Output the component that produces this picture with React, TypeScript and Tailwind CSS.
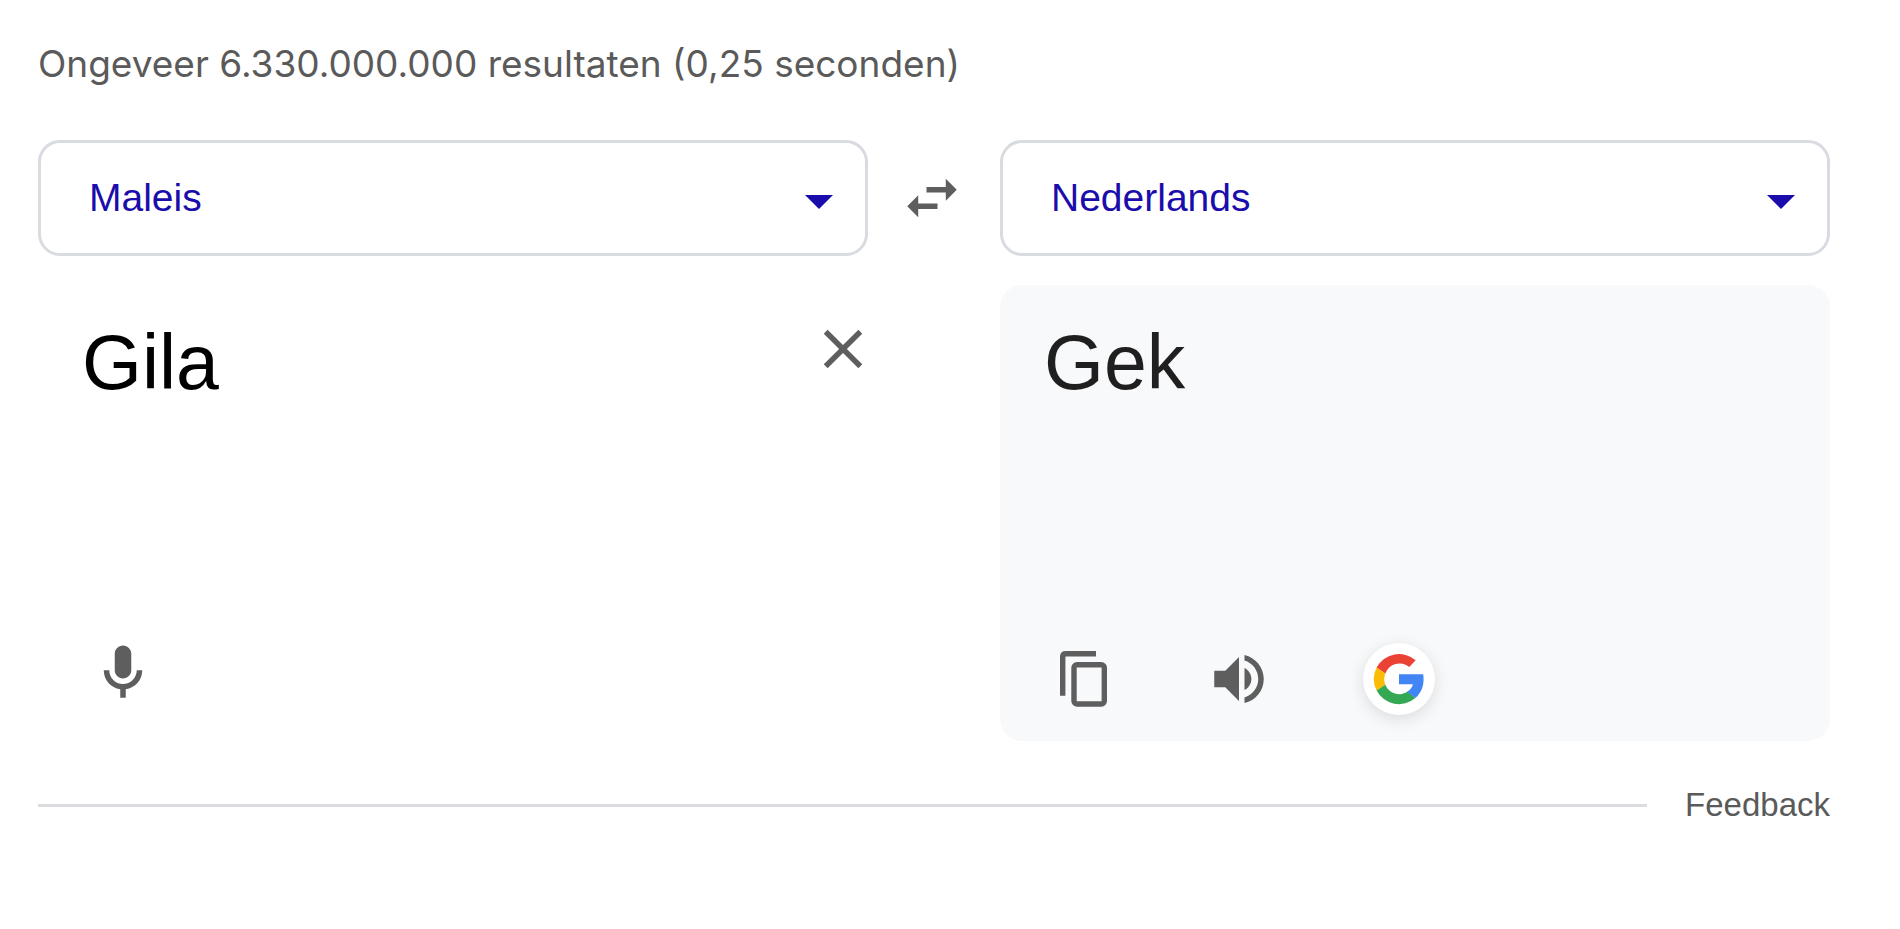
import { ReactNode, useState } from "react";

const SANS = "font-['Liberation_Sans',Arial,sans-serif]";

const LANGUAGES = ["Maleis", "Nederlands"];

function LanguageSelect({
  label,
  value,
  onChange,
}: {
  label: string;
  value: string;
  onChange: (value: string) => void;
}) {
  return (
    <div className="relative">
      <select
        aria-label={label}
        value={value}
        onChange={(e) => onChange(e.target.value)}
        className="block h-[116px] w-full cursor-pointer appearance-none rounded-[22px] border-3 border-[#d8dbe0] bg-white pr-20 pl-12 text-[39px] text-[#1a0dab]"
      >
        {LANGUAGES.map((name) => (
          <option key={name}>{name}</option>
        ))}
      </select>
      <svg
        aria-hidden="true"
        viewBox="0 0 28 14"
        className="pointer-events-none absolute top-[55px] right-[35px] h-[14px] w-7 fill-[#1a0dab]"
      >
        <path d="M0 0h28L14 14z" />
      </svg>
    </div>
  );
}

function IconButton({
  label,
  onClick,
  children,
}: {
  label: string;
  onClick?: () => void;
  children: ReactNode;
}) {
  return (
    <button
      type="button"
      aria-label={label}
      onClick={onClick}
      className="flex size-[66px] shrink-0 cursor-pointer items-center justify-center text-[#5e5e5e]"
    >
      {children}
    </button>
  );
}

function Glyph({ d }: { d: string }) {
  return (
    <svg viewBox="0 0 24 24" className="size-full fill-current" aria-hidden="true">
      <path d={d} />
    </svg>
  );
}

export default function App() {
  const [source, setSource] = useState("Maleis");
  const [target, setTarget] = useState("Nederlands");
  const [text, setText] = useState("Gila");

  return (
    <main className={`${SANS} bg-white pt-9 pr-[70px] pb-24 pl-[38px]`}>
      <p className="font-['Inter',sans-serif] text-[37px] leading-[56px] text-[#5a5a5a]">
        Ongeveer 6.330.000.000 resultaten (0,25 seconden)
      </p>

      <div className="mt-12 grid grid-cols-[1fr_132px_1fr] items-center">
        <LanguageSelect label="Brontaal" value={source} onChange={setSource} />
        <div className="flex justify-center pr-1">
          <IconButton
            label="Talen omwisselen"
            onClick={() => {
              setSource(target);
              setTarget(source);
            }}
          >
            <Glyph d="M6.99 11L3 15l3.99 4v-3H14v-2H6.99v-3zM21 9l-3.99-4v3H10v2h7.01v3L21 9z" />
          </IconButton>
        </div>
        <LanguageSelect label="Doeltaal" value={target} onChange={setTarget} />
      </div>

      <div className="mt-[29px] grid grid-cols-2 gap-[132px]">
        <section className="flex min-h-[456px] flex-col justify-between pt-[31px] pb-[35px]">
          <div className="flex items-start pl-11">
            <textarea
              aria-label="Brontekst"
              rows={1}
              value={text}
              onChange={(e) => setText(e.target.value)}
              className="block min-w-0 flex-1 resize-none overflow-hidden text-[77px] leading-[92px] text-black outline-none"
            />
            <div className="-mr-2">
              <IconButton label="Tekst wissen" onClick={() => setText("")}>
                <Glyph d="M19 6.41L17.59 5 12 10.59 6.41 5 5 6.41 10.59 12 5 17.59 6.41 19 12 13.41 17.59 19 19 17.59 13.41 12z" />
              </IconButton>
            </div>
          </div>
          <div className="pl-13">
            <IconButton label="Spraakinvoer">
              <Glyph d="M12 14c1.66 0 3-1.34 3-3V5c0-1.66-1.34-3-3-3S9 3.34 9 5v6c0 1.66 1.34 3 3 3zM17 11c0 2.76-2.24 5-5 5s-5-2.24-5-5H5c0 3.53 2.61 6.43 6 6.92V21h2v-3.08c3.39-.49 6-3.39 6-6.92h-2z" />
            </IconButton>
          </div>
        </section>

        <section className="flex min-h-[456px] flex-col justify-between rounded-[22px] bg-[#f8f9fb] px-11 pt-[31px] pb-[26px]">
          <p className="text-[77px] leading-[92px] text-[#1f1f1f]">Gek</p>
          <div className="flex items-center pl-[6px]">
            <IconButton label="Kopiëren">
              <svg viewBox="0 0 47 56" className="h-14 w-[47px]" aria-hidden="true">
                <path
                  d="M2.7 44.8V6q0-3.2 3.2-3.2H36"
                  fill="none"
                  stroke="currentColor"
                  strokeWidth="5.4"
                />
                <rect
                  x="14"
                  y="13.8"
                  width="30.3"
                  height="39.2"
                  rx="3"
                  fill="none"
                  stroke="currentColor"
                  strokeWidth="5.4"
                />
              </svg>
            </IconButton>
            <div className="ml-[90px]">
              <IconButton label="Beluisteren">
                <Glyph d="M3 9v6h4l5 5V4L7 9H3zm13.5 3c0-1.77-1.02-3.29-2.5-4.03v8.05c1.48-.73 2.5-2.25 2.5-4.02zM14 3.23v2.06c2.89.86 5 3.54 5 6.71s-2.11 5.85-5 6.71v2.06c4.01-.91 7-4.49 7-8.77s-2.99-7.86-7-8.77z" />
              </IconButton>
            </div>
            <button
              type="button"
              aria-label="Zoeken met Google"
              className="ml-[91px] flex size-[72px] cursor-pointer items-center justify-center rounded-full bg-white shadow-[0_4px_16px_rgba(0,0,0,0.12)]"
            >
              <svg viewBox="-28 -28 56 56" className="size-14" aria-hidden="true">
                <path
                  fill="#EA4335"
                  d="M16.7-18.7A25.2 25.2 0 0 0-22.4-11.4L-13.7-5.5A15 15 0 0 1 10.2-12z"
                />
                <path
                  fill="#FBBC05"
                  d="M-22.4-11.4A25.2 25.2 0 0 0-22.4 11.4L-13.7 5.8A15 15 0 0 1-13.7-5.5z"
                />
                <path
                  fill="#34A853"
                  d="M-22.4 11.4A25.2 25.2 0 0 0 16.4 19.1L8.8 12.4A15 15 0 0 1-13.7 5.8z"
                />
                <path
                  fill="#4285F4"
                  d="M0-4.7H24.2C25.6 5 23.2 13 16.4 19.1L8.2 12.7C11.3 11 13.2 8.4 13.9 5.2H0z"
                />
              </svg>
            </button>
          </div>
        </section>
      </div>

      <footer className="mt-11 flex items-center gap-[38px]">
        <hr className="flex-1 border-0 border-t-3 border-[#dadce0]" />
        <a href="#feedback" className="text-[33px] leading-10 text-[#5a5a5a]">
          Feedback
        </a>
      </footer>
    </main>
  );
}
